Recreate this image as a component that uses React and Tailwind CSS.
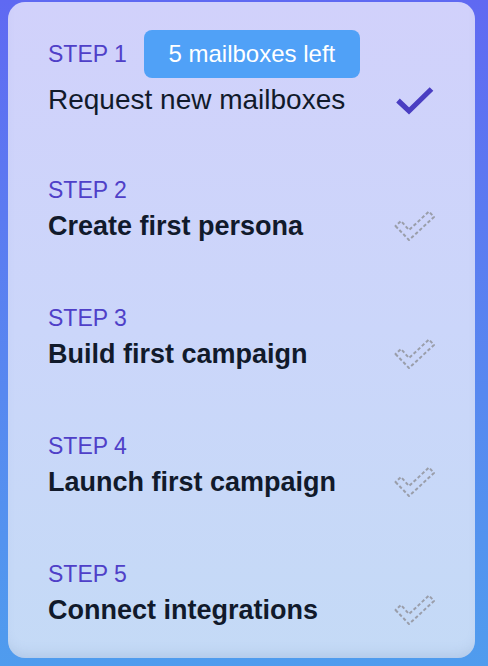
import React from "react";

const font = { fontFamily: '"Liberation Sans", Arial, sans-serif' };

function SolidCheck() {
  return (
    <svg width="40" height="32" viewBox="0 0 40 32" className="shrink-0">
      <polyline
        points="3,16.5 14,27 36.5,5"
        fill="none"
        stroke="#4a3ec2"
        strokeWidth="5.2"
        strokeLinejoin="miter"
      />
    </svg>
  );
}

function DashedCheck() {
  return (
    <svg width="42" height="32" viewBox="0 0 42 32" className="shrink-0 mr-[-1px]">
      <polygon
        points="1.5,16 15,30 40,7 35,1.5 15,20 7,11"
        fill="none"
        stroke="#9a9eaa"
        strokeWidth="2"
        strokeDasharray="3.4 2.2"
        strokeLinejoin="round"
      />
    </svg>
  );
}

function Step({ n, title, className = "" }) {
  return (
    <div className={className}>
      <div className="text-[23px] leading-[28px] text-[#4f40c8]">STEP {n}</div>
      <div className="mt-[4px] flex items-center justify-between">
        <div className="text-[27px] leading-[36px] font-bold text-[#111a2b]">{title}</div>
        <DashedCheck />
      </div>
    </div>
  );
}

export default function App() {
  return (
    <div
      className="w-[488px] h-[666px] bg-gradient-to-b from-[#5f69f2] to-[#4f9cee] pt-[2px] pl-[8px]"
      style={font}
    >
      <div className="w-[467px] h-[656px] rounded-[17px] bg-gradient-to-b from-[#d1d1fb] via-[#cbd6fa] to-[#c4daf6] shadow-[inset_0_-10px_14px_-8px_rgba(90,120,170,0.22)] pl-[40px] pr-[40px] pt-[28px]">
        <div>
          <div className="flex items-center h-[48px]">
            <div className="text-[23px] leading-[28px] text-[#4f40c8]">STEP 1</div>
            <div className="ml-[17px] w-[216px] h-[48px] rounded-[8px] bg-[#50a1f7] flex items-center justify-center text-white text-[24px]">
              5 mailboxes left
            </div>
          </div>
          <div className="mt-[4px] flex items-center justify-between">
            <div className="text-[28px] leading-[36px] text-[#111a2b]">Request new mailboxes</div>
            <SolidCheck />
          </div>
        </div>
        <Step n={2} title="Create first persona" className="mt-[58px]" />
        <Step n={3} title="Build first campaign" className="mt-[60px]" />
        <Step n={4} title="Launch first campaign" className="mt-[60px]" />
        <Step n={5} title="Connect integrations" className="mt-[60px]" />
      </div>
    </div>
  );
}
